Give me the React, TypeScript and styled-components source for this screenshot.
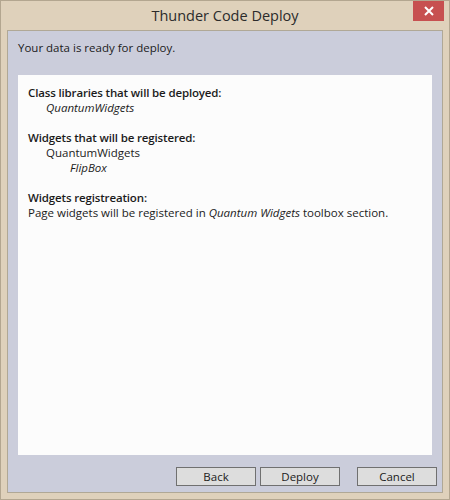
import React from "react";
import styled, { createGlobalStyle } from "styled-components";

const Global = createGlobalStyle`
  html, body { margin: 0; padding: 0; background: #dfd1bb; }
  body { font-family: "Open Sans", "Noto Sans", sans-serif; }
  * { box-sizing: border-box; }
`;

const Window = styled.div`
  width: 450px;
  height: 500px;
  border: 1px solid #b3a690;
  background: #dfd1bb;
  display: flex;
  flex-direction: column;
  padding: 0 6px 6px 6px;
`;

const TitleBar = styled.div`
  height: 29px;
  display: flex;
  align-items: center;
  justify-content: center;
  position: relative;
  font-size: 14.5px;
  color: #2b2b2b;
`;

const CloseButton = styled.div`
  position: absolute;
  right: -1px;
  top: 0;
  width: 31px;
  height: 20px;
  background: #c75050;
  display: flex;
  align-items: center;
  justify-content: center;
`;

const Client = styled.div`
  flex: 1;
  border: 1px solid #b0a896;
  background: #cbcddb;
  display: flex;
  flex-direction: column;
  padding: 9px 5px 4px 10px;
  font-size: 11.5px;
  color: #1b1b1b;
`;

const Intro = styled.div`
  height: 15px;
  line-height: 15px;
  margin-bottom: 20px;
`;

const Panel = styled.div`
  width: 414px;
  height: 380px;
  background: #fcfcfc;
  padding: 10px 10px;
  line-height: 15px;
`;

const Heading = styled.div`
  font-weight: 600;
  letter-spacing: -0.15px;
`;

const Line = styled.div<{ $indent?: number; $italic?: boolean }>`
  padding-left: ${(p) => p.$indent ?? 0}px;
  font-style: ${(p) => (p.$italic ? "italic" : "normal")};
`;

const Gap = styled.div`
  height: 15px;
`;

const Buttons = styled.div`
  display: flex;
  justify-content: flex-end;
  margin-top: 12px;
  gap: 4px;
`;

const Button = styled.button<{ $extraGap?: boolean }>`
  width: 80px;
  height: 19px;
  background: #dddddd;
  border: 1px solid #707070;
  font-family: inherit;
  font-size: 11.5px;
  color: #1b1b1b;
  padding: 0;
  line-height: 17px;
  margin-left: ${(p) => (p.$extraGap ? "13px" : "0")};
`;

export default function App() {
  return (
    <>
      <Global />
      <Window>
        <TitleBar>
          Thunder Code Deploy
          <CloseButton>
            <svg width="10" height="10" viewBox="0 0 10 10">
              <path d="M1 1 L9 9 M9 1 L1 9" stroke="#fff" strokeWidth="2" />
            </svg>
          </CloseButton>
        </TitleBar>
        <Client>
          <Intro>Your data is ready for deploy.</Intro>
          <Panel>
            <Heading>Class libraries that will be deployed:</Heading>
            <Line $indent={18} $italic>QuantumWidgets</Line>
            <Gap />
            <Heading>Widgets that will be registered:</Heading>
            <Line $indent={18}>QuantumWidgets</Line>
            <Line $indent={42} $italic>FlipBox</Line>
            <Gap />
            <Heading>Widgets registreation:</Heading>
            <Line>
              Page widgets will be registered in <i>Quantum Widgets</i> toolbox section.
            </Line>
          </Panel>
          <Buttons>
            <Button>Back</Button>
            <Button>Deploy</Button>
            <Button $extraGap>Cancel</Button>
          </Buttons>
        </Client>
      </Window>
    </>
  );
}
